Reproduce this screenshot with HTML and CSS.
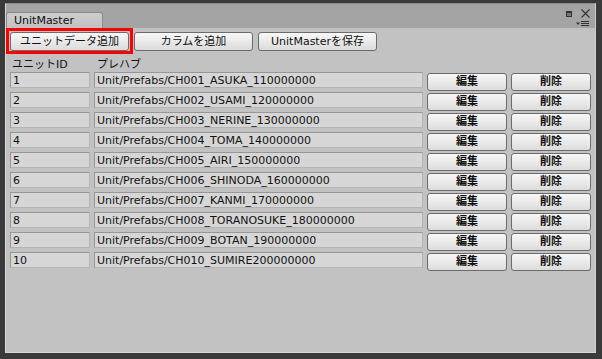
FILE: index.html
```html
<!DOCTYPE html>
<html lang="ja">
<head>
  <meta charset="UTF-8">
  <title>UnitMaster</title>
  <link rel="stylesheet" href="styles.css">
</head>
<body>

  <div class="window">
    <div class="tab-bar">
      <div class="tab">UnitMaster</div>
      <div class="win-icons">
        <div class="icon-row">
          <span class="max-icon"></span>
          <svg class="close-icon" width="9" height="9" viewBox="0 0 9 9">
            <path d="M0.5 0.5 L8.5 8.5 M8.5 0.5 L0.5 8.5" stroke="#333" stroke-width="1.1" fill="none"/>
          </svg>
        </div>
        <svg class="menu-icon" width="14" height="6" viewBox="0 0 14 6">
          <path d="M0 1.5 H4 L2 4 Z" fill="#333"/>
          <path d="M5 0.5 H13 M5 2.5 H13 M5 4.5 H13" stroke="#333" stroke-width="1"/>
        </svg>
      </div>
    </div>

    <div class="content">
      <div class="toolbar">
        <div class="highlight">
          <button class="btn btn-top">ユニットデータ追加</button>
        </div>
        <button class="btn btn-top btn-columns">カラムを追加</button>
        <button class="btn btn-top btn-save">UnitMasterを保存</button>
      </div>

      <div class="head-row">
        <span class="col-id">ユニットID</span>
        <span class="col-path">プレハブ</span>
      </div>

      <div id="rows"></div>
    </div>
  </div>

  <script>
    const units = [
      'CH001_ASUKA_110000000',
      'CH002_USAMI_120000000',
      'CH003_NERINE_130000000',
      'CH004_TOMA_140000000',
      'CH005_AIRI_150000000',
      'CH006_SHINODA_160000000',
      'CH007_KANMI_170000000',
      'CH008_TORANOSUKE_180000000',
      'CH009_BOTAN_190000000',
      'CH010_SUMIRE200000000'
    ];

    const rowsDiv = document.getElementById('rows');
    units.forEach((name, index) => {
      const row = document.createElement('div');
      row.className = 'row';
      row.innerHTML = `
        <div class="field field-id">${index + 1}</div>
        <div class="field field-path">Unit/Prefabs/${name}</div>
        <button class="btn btn-row">編集</button>
        <button class="btn btn-row">削除</button>
      `;
      rowsDiv.appendChild(row);
    });
  </script>

</body>
</html>
```

FILE: styles.css
```css
html, body {
  margin: 0;
  padding: 0;
}

body {
  width: 602px;
  height: 359px;
  background-color: #3a3a3a;
  font-family: "DejaVu Sans", "Noto Sans CJK JP", sans-serif;
  font-size: 11px;
  color: #111;
  padding: 3px 6px 6px 5px;
  box-sizing: border-box;
  overflow: hidden;
}

.window {
  height: 350px;
  display: flex;
  flex-direction: column;
  border-left: 1px solid #d8d8d8;
  border-bottom: 1px solid #d8d8d8;
  border-top: 1px solid #8c8c8c;
  border-right: 1px solid #d0d0d0;
  box-sizing: border-box;
  background-color: #c2c2c2;
}

.tab-bar {
  height: 24px;
  background-color: #a4a4a4;
  display: flex;
  align-items: flex-end;
  justify-content: space-between;
}

.tab {
  margin-left: 0;
  width: 97px;
  height: 16px;
  line-height: 16px;
  padding-left: 7px;
  box-sizing: border-box;
  background: linear-gradient(#cdcdcd, #c2c2c2);
  border: 1px solid #8a8a8a;
  border-bottom: none;
  border-radius: 3px 3px 0 0;
  color: #111;
}

.win-icons {
  display: flex;
  flex-direction: column;
  align-items: flex-end;
  padding: 5px 5px 1px 0;
  align-self: stretch;
  gap: 3px;
}

.icon-row {
  display: flex;
  align-items: center;
  gap: 9px;
}

.max-icon {
  width: 4px;
  height: 3px;
  border: 1px solid #333;
  border-top-width: 2px;
  background-color: #777;
}

.close-icon {
  display: block;
}

.menu-icon {
  display: block;
}

.content {
  flex: 1;
  padding: 0 0 0 4px;
}

.toolbar {
  display: flex;
  align-items: center;
  height: 26px;
}

.highlight {
  border: 3px solid #ff0000;
  margin-left: -4px;
  padding: 0 1px;
  height: 20px;
  display: flex;
  align-items: center;
}

.btn {
  font-family: "DejaVu Sans", "Noto Sans CJK JP", sans-serif;
  font-size: 11px;
  color: #111;
  background: linear-gradient(#f7f7f7, #dcdcdc);
  border: 1px solid #6b6b6b;
  border-radius: 3px;
  padding: 0;
  margin: 0;
}

.btn-top {
  width: 119px;
  height: 19px;
  line-height: 17px;
}

.btn-columns {
  margin-left: 1px;
}

.btn-save {
  margin-left: 5px;
}

.head-row {
  display: flex;
  height: 18px;
  align-items: center;
  box-sizing: border-box;
}

.col-id {
  width: 85px;
  padding-left: 2px;
}

.row {
  display: flex;
  gap: 4px;
  height: 20px;
}

.field {
  height: 16px;
  line-height: 16px;
  box-sizing: border-box;
  padding-left: 2px;
  background-color: #d6d6d6;
  border: 1px solid #979797;
  border-bottom-color: #b4b4b4;
  border-right-color: #b4b4b4;
  white-space: nowrap;
  overflow: hidden;
}

.field-id {
  width: 80px;
}

.field-path {
  width: 329px;
}

.btn-row {
  width: 80px;
  height: 18px;
  margin-top: 1px;
  line-height: 16px;
  font-weight: bold;
}
```
